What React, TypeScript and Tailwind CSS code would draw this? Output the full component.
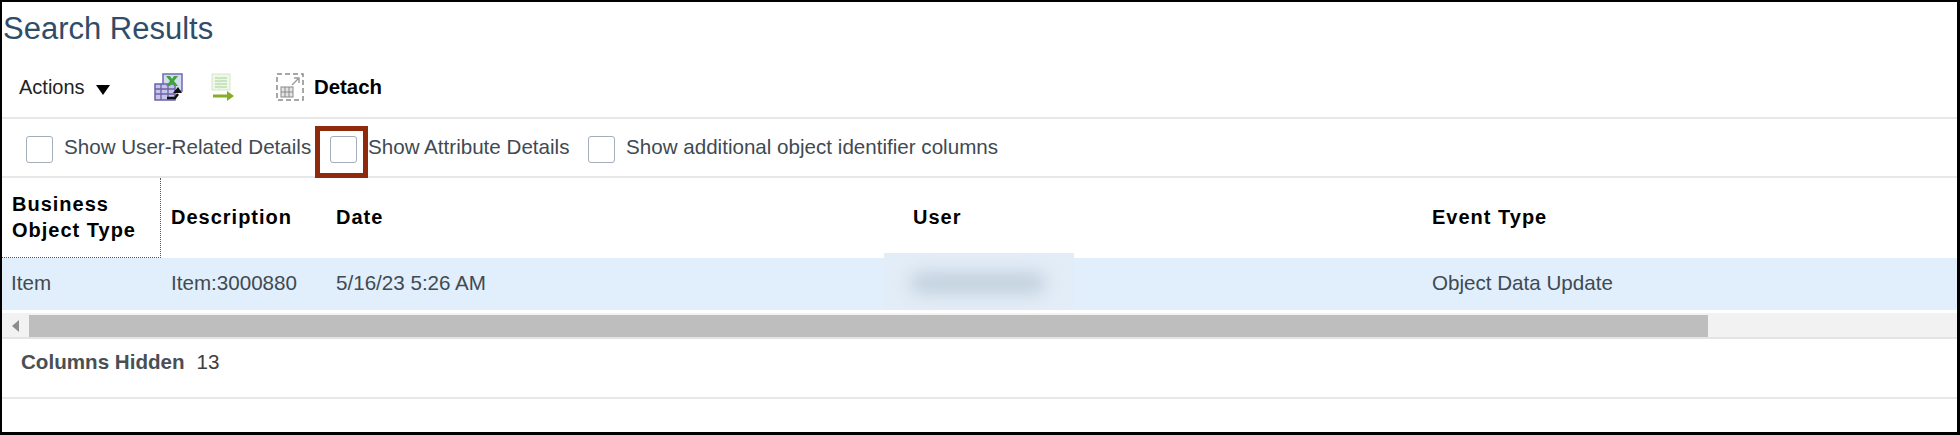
import React from "react";

/** Small toolbar drawings: export to spreadsheet, export list, detach. */
function ExportIcon() {
  return (
    <svg width="29" height="29" viewBox="0 0 29 29" aria-hidden>
      <rect x="9" y="1" width="19" height="17" fill="#d5dcef" stroke="#6f6bb0" strokeWidth="1.5" />
      <rect x="1" y="11" width="20" height="16" fill="#c9c5e6" stroke="#6a63a8" strokeWidth="1.5" />
      <path d="M1 16h20M1 21h20M7 11v16M14 11v16" stroke="#6a63a8" strokeWidth="1.3" />
      <path d="M12 3h4l2 3 2-3h4l-4 5 4 5h-4l-2-3-2 3h-4l4-5z" fill="#3fa53a" />
      <path d="M13 25h8l3-4" fill="none" stroke="#111" strokeWidth="2.5" />
      <path d="M19 20l5-6 4 6z" fill="#111" />
    </svg>
  );
}

function ListExportIcon() {
  return (
    <svg width="24" height="28" viewBox="0 0 24 28" aria-hidden>
      <rect x="1" y="1" width="18" height="16" fill="#eef7ea" stroke="#d3e8ca" />
      <path d="M4 5h12M4 8h12M4 11h12M4 14h12" stroke="#b9dfb0" strokeWidth="1.4" />
      <path d="M8 4v12" stroke="#d3e8ca" />
      <path d="M2 23h15" stroke="#86ac2a" strokeWidth="3" />
      <path d="M16 18l7 5-7 5z" fill="#86ac2a" />
    </svg>
  );
}

function DetachIcon() {
  return (
    <svg width="28" height="28" viewBox="0 0 28 28" aria-hidden>
      <rect x="1" y="1" width="26" height="26" fill="none" stroke="#8a8a8a" strokeWidth="1.5" strokeDasharray="5 3" />
      <rect x="5" y="14" width="12" height="10" fill="#e4e4e4" stroke="#8a8a8a" />
      <path d="M5 19h12M9 14v10M13 14v10" stroke="#8a8a8a" />
      <path d="M16 12l7-7M18 5h5v5" fill="none" stroke="#9a9a9a" strokeWidth="1.4" />
    </svg>
  );
}

function Checkbox() {
  return <span className="block h-[27px] w-[27px] shrink-0 rounded-[3px] border border-[#a4aeb8] bg-white" />;
}

const tableCols = "grid grid-cols-[159px_175px_577px_519px_1fr]";

export default function App() {
  return (
    <div className="h-[435px] w-[1960px] overflow-hidden border-2 border-r-[3px] border-b-[3px] border-black bg-white font-['Liberation_Sans',sans-serif] text-[20.6px] text-[#3f4a52]">
      <h1 className="h-[52px] pl-px pt-[10px] text-[31px] leading-[34px] text-[#2f4d68]">Search Results</h1>

      <div className="flex h-[65px] items-center border-b-2 border-[#e6e8ea] pt-[3px] text-[20px] text-[#222]">
        <span className="ml-[17px] w-[67px]">Actions</span>
        <span className="ml-[10px] mt-[5px] h-0 w-0 border-x-[7.5px] border-t-[10px] border-x-transparent border-t-black" />
        <span className="ml-[44px] flex"><ExportIcon /></span>
        <span className="ml-[28px] flex"><ListExportIcon /></span>
        <span className="ml-[41px] flex"><DetachIcon /></span>
        <span className="ml-[10px] text-[20.4px] font-bold text-black">Detach</span>
      </div>

      <div className="flex h-[59px] items-center border-b-2 border-[#e6e8ea] pt-[4px]">
        <span className="ml-[24px]"><Checkbox /></span>
        <span className="mb-[4px] ml-[11px] w-[266px]">Show User-Related Details</span>
        <span className="relative">
          <Checkbox />
          <span className="absolute -left-[15px] -top-[10px] h-[52px] w-[53px] border-[5px] border-[#8f2a0c]" />
        </span>
        <span className="mb-[4px] ml-[11px] w-[220px]">Show Attribute Details</span>
        <span><Checkbox /></span>
        <span className="mb-[4px] ml-[11px]">Show additional object identifier columns</span>
      </div>

      <div className={`${tableCols} h-[80px] items-center text-[20px] font-bold tracking-[1px] text-black`}>
        <div className="flex h-full items-center border-b border-r border-dotted border-[#555] pb-[2px] pl-[10px] leading-[26px]">
          Business<br />Object Type
        </div>
        <div className="mb-[2px] pl-[10px]">Description</div>
        <div className="mb-[2px]">Date</div>
        <div className="mb-[2px]">User</div>
        <div className="mb-[2px]">Event Type</div>
      </div>

      <div className={`${tableCols} h-[52px] items-center bg-[#e1eefb]`}>
        <div className="mb-[1px] pl-[9px]">Item</div>
        <div className="mb-[1px] pl-[10px]">Item:3000880</div>
        <div className="mb-[1px]">5/16/23 5:26 AM</div>
        <div className="relative h-full">
          <span className="absolute -left-[29px] -top-[5px] bottom-0 w-[190px] bg-[#e3edf7]" />
          <span className="absolute -left-[3px] top-[15px] h-[20px] w-[136px] rounded-full bg-[#bfcedc] blur-[9px]" />
        </div>
        <div className="mb-[1px]">Object Data Update</div>
      </div>

      <div className="mt-[3px] flex h-[26px] items-start border-b-2 border-[#e4e4e4] bg-[#f2f2f2] pt-[2px]">
        <div className="flex h-[22px] w-[27px] items-center pl-[10px]">
          <span className="h-0 w-0 border-y-[6px] border-r-[7px] border-y-transparent border-r-[#8c8c8c]" />
        </div>
        <div className="h-[22px] w-[1679px] bg-[#bebebe]" />
      </div>

      <div className="flex h-[60px] items-center border-b-2 border-[#e8e8e8] pb-[12px]">
        <span className="ml-[19px] font-bold text-[#4a4f54]">Columns Hidden</span>
        <span className="ml-[12px] text-[#3a3f44]">13</span>
      </div>
    </div>
  );
}
